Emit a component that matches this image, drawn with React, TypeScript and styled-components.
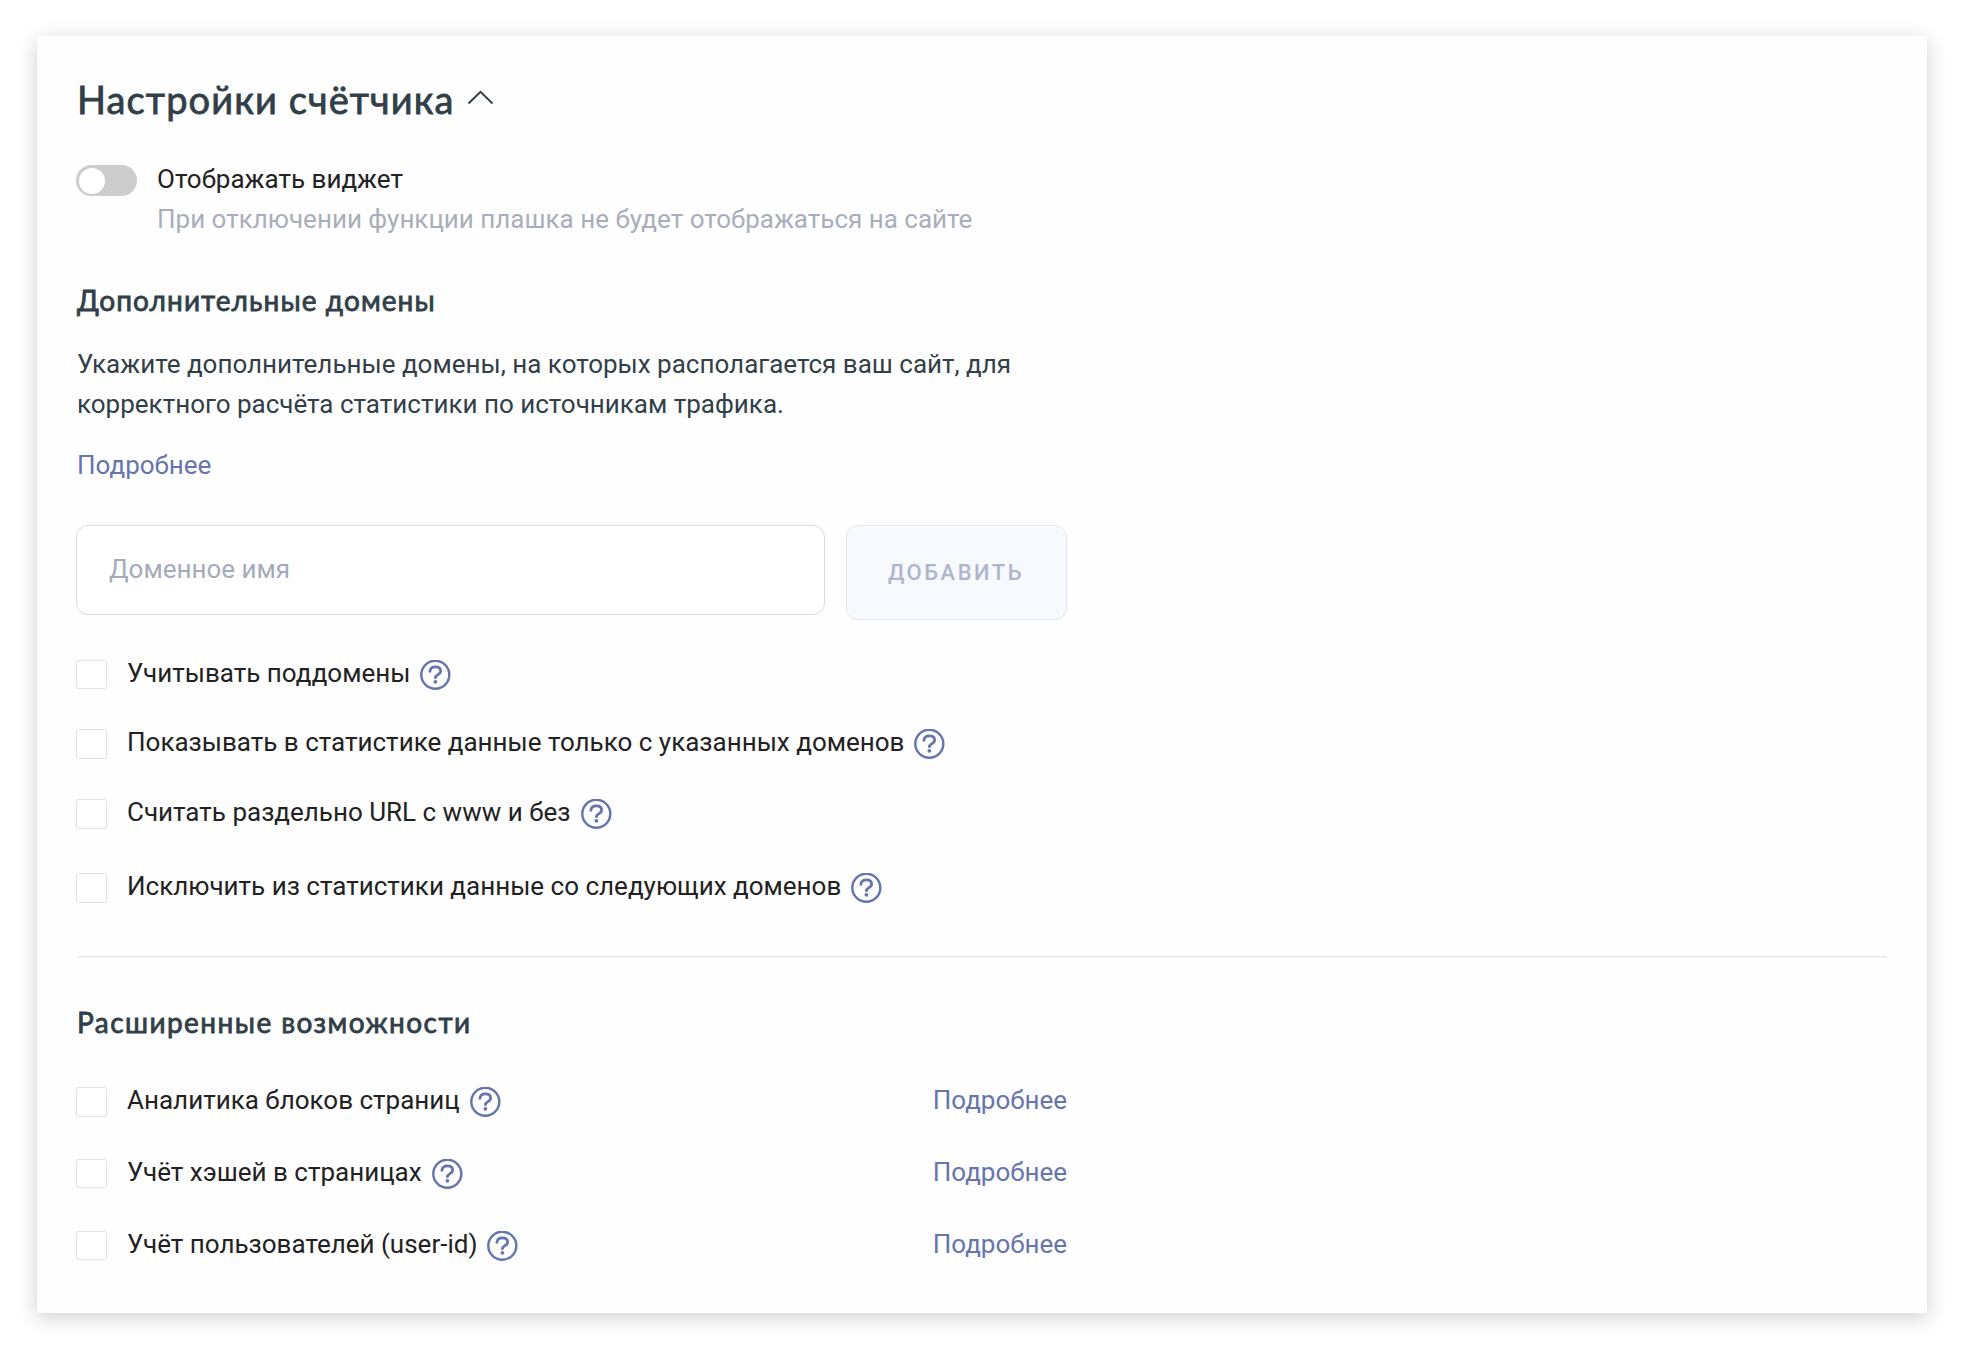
import React from "react";
import styled, { createGlobalStyle } from "styled-components";

const GlobalStyle = createGlobalStyle`
  * { box-sizing: border-box; }
  body {
    margin: 0;
    background: #ffffff;
    font-family: Roboto, "Noto Sans", sans-serif;
    font-size: 26px;
    color: #222222;
  }
`;

const Page = styled.main`
  padding: 36px 37px 35px;
`;

const Card = styled.section`
  display: flex;
  flex-direction: column;
  height: 1277px;
  padding: 38px 40px 0;
  background: #fefefe;
  box-shadow: 0 5px 20px rgba(0, 0, 0, 0.19);
`;

const TitleRow = styled.header`
  display: flex;
  align-items: center;
  gap: 12px;
  height: 50px;
`;

const Title = styled.h2`
  margin: 0;
  font-family: Lato, "Noto Sans", sans-serif;
  font-size: 38px;
  line-height: 50px;
  font-weight: 400;
  letter-spacing: 1.12px;
  color: #323e48;
  -webkit-text-stroke: 0.8px #323e48;
  white-space: nowrap;
`;

const Chevron = styled.svg`
  width: 27px;
  height: 15px;
  margin-top: -3px;
`;

const WidgetOption = styled.div`
  display: flex;
  align-items: flex-start;
  gap: 20px;
  margin-top: 35px;
  margin-left: -1px;
`;

const Switch = styled.button`
  display: flex;
  align-items: center;
  width: 61px;
  height: 31px;
  margin-top: 6px;
  padding: 0 3px;
  border: 0;
  border-radius: 16px;
  background: #cccccc;
`;

const Knob = styled.span`
  width: 26px;
  height: 26px;
  border-radius: 50%;
  background: #ffffff;
`;

const Line = styled.div<{ $color?: string }>`
  line-height: 40px;
  color: ${(p) => p.$color ?? "#222222"};
  white-space: nowrap;
`;

const Subtitle = styled.h3<{ $top: number; $spacing: number }>`
  margin: ${(p) => p.$top}px 0 0;
  font-family: Lato, "Noto Sans", sans-serif;
  font-size: 28px;
  line-height: 40px;
  font-weight: 400;
  letter-spacing: ${(p) => p.$spacing}px;
  color: #323e48;
  -webkit-text-stroke: 0.8px #323e48;
  white-space: nowrap;
`;

const Description = styled.div`
  margin-top: 24px;
`;

const MoreLink = styled.a`
  color: #6675ab;
  line-height: 26px;
  text-decoration: none;
  white-space: nowrap;
`;

const LinkLine = styled.div`
  display: flex;
  margin-top: 28px;
`;

const DomainForm = styled.div`
  display: flex;
  align-items: flex-start;
  gap: 21px;
  margin-top: 47px;
  margin-left: -1px;
`;

const DomainInput = styled.input`
  width: 749px;
  height: 90px;
  padding: 0 32px 3px;
  border: 1px solid #d8d9e4;
  border-radius: 12px;
  background: #ffffff;
  font: inherit;
  outline: none;
  &::placeholder {
    color: #a5abbb;
    opacity: 1;
  }
`;

const AddButton = styled.button`
  width: 221px;
  height: 95px;
  padding: 0 1px 1px 0;
  border: 1px solid #e3e7ef;
  border-radius: 12px;
  background: #f6f9fe;
  color: #afb5ca;
  font-family: inherit;
  font-size: 22px;
  font-weight: 500;
  letter-spacing: 2.5px;
`;

const OptionRow = styled.div<{ $top: number }>`
  display: flex;
  align-items: flex-start;
  height: 30px;
  width: 990px;
  margin-top: ${(p) => p.$top}px;
`;

const Box = styled.span<{ $height: number }>`
  flex: none;
  width: 31px;
  height: ${(p) => p.$height}px;
  margin-left: -1px;
  margin-right: 20px;
  border: 1px solid #e2e2e9;
  border-radius: 2px;
  background: #ffffff;
`;

const OptionText = styled.span`
  line-height: 26px;
  white-space: nowrap;
`;

const HelpSvg = styled.svg`
  flex: none;
  width: 31px;
  height: 31px;
  margin-left: 10px;
`;

const Aside = styled.span`
  display: flex;
  margin-left: auto;
`;

const Divider = styled.hr`
  width: 100%;
  height: 2px;
  margin: 53px 0 0;
  border: 0;
  border-top: 1px solid #e8e8f3;
  background: #f3f3f9;
`;

const HelpIcon = () => (
  <HelpSvg viewBox="0 0 31 31" fill="none" stroke="#6675ab">
    <circle cx="15.300" cy="14.700" r="14" strokeWidth="2.400" />
    <path
      d="M9.900 11.400c.3-3 2.400-4.500 5.500-4.500 3.100 0 5.300 1.600 5.300 4.300 0 3.300-5.200 3.500-5.300 6.500"
      strokeWidth="2.800"
      strokeLinecap="round"
    />
    <circle cx="15.400" cy="21.800" r="1.900" fill="#6675ab" stroke="none" />
  </HelpSvg>
);

interface OptionProps {
  label: string;
  top: number;
  boxHeight?: number;
  more?: boolean;
}

const Option = ({ label, top, boxHeight = 30, more }: OptionProps) => (
  <OptionRow $top={top}>
    <Box $height={boxHeight} role="checkbox" aria-checked={false} />
    <OptionText>{label}</OptionText>
    <HelpIcon />
    {more && (
      <Aside>
        <MoreLink>Подробнее</MoreLink>
      </Aside>
    )}
  </OptionRow>
);

export default function App() {
  return (
    <>
      <GlobalStyle />
      <Page>
        <Card>
          <TitleRow>
            <Title>Настройки счётчика</Title>
            <Chevron viewBox="0 0 27 15" fill="none" stroke="#323e48" strokeWidth="2">
              <path d="M1.500 13.500 13.500 1.800 25.500 13.500" />
            </Chevron>
          </TitleRow>

          <WidgetOption>
            <Switch role="switch" aria-checked={false}>
              <Knob />
            </Switch>
            <div>
              <Line>Отображать виджет</Line>
              <Line $color="#a9aeba">
                При отключении функции плашка не будет отображаться на сайте
              </Line>
            </div>
          </WidgetOption>

          <Subtitle $top={41} $spacing={1.08}>Дополнительные домены</Subtitle>
          <Description>
            <Line $color="#323e48">Укажите дополнительные домены, на которых располагается ваш сайт, для</Line>
            <Line $color="#323e48">корректного расчёта статистики по источникам трафика.</Line>
          </Description>
          <LinkLine>
            <MoreLink>Подробнее</MoreLink>
          </LinkLine>

          <DomainForm>
            <DomainInput placeholder="Доменное имя" />
            <AddButton>ДОБАВИТЬ</AddButton>
          </DomainForm>

          <Option top={40} boxHeight={29} label="Учитывать поддомены" />
          <Option top={39} label="Показывать в статистике данные только с указанных доменов" />
          <Option top={40} label="Считать раздельно URL с www и без" />
          <Option top={44} label="Исключить из статистики данные со следующих доменов" />

          <Divider />

          <Subtitle $top={44} $spacing={1.44}>Расширенные возможности</Subtitle>
          <Option top={45} label="Аналитика блоков страниц" more />
          <Option top={42} boxHeight={29} label="Учёт хэшей в страницах" more />
          <Option top={42} boxHeight={29} label="Учёт пользователей (user-id)" more />
        </Card>
      </Page>
    </>
  );
}
